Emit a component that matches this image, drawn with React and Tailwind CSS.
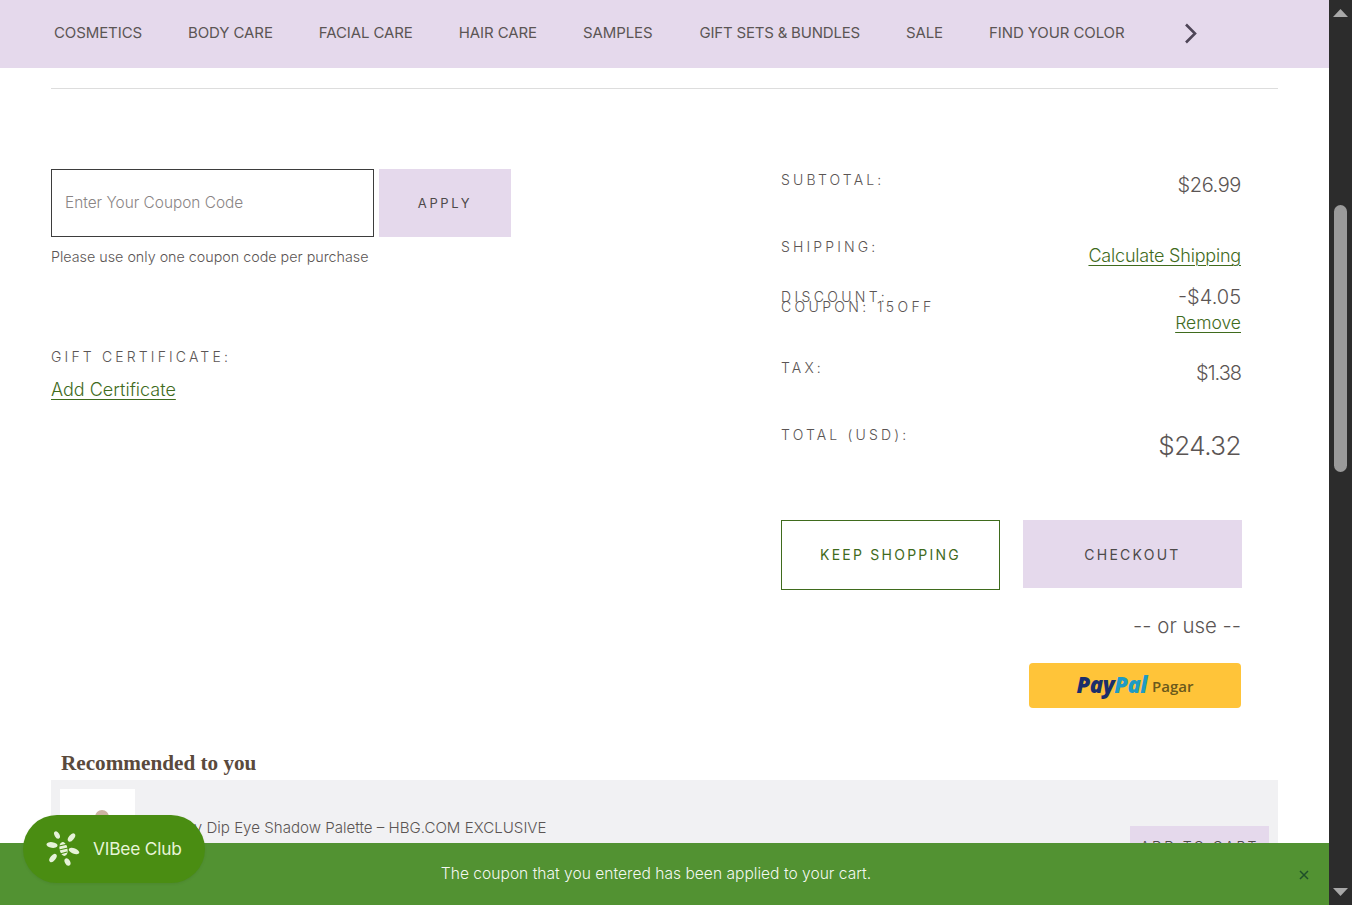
const F = "font-['Inter',sans-serif]";
const nav = ["COSMETICS","BODY CARE","FACIAL CARE","HAIR CARE","SAMPLES"];
const nav2 = ["SALE","FIND YOUR COLOR"];
const GREEN = "text-[#3f6b1d] underline underline-offset-[3px] decoration-1";
const NAVITEM = "text-[15px] font-normal whitespace-nowrap pb-[2px]";

function Label({ children, cls = "", wide = false }) {
  return <span className={`block text-[14px] leading-[20px] ${wide ? "tracking-[0.24em]" : "tracking-[0.225em]"} text-[#5b5554] whitespace-nowrap ${cls}`}>{children}</span>;
}

function Bee() {
  return (
    <svg width="36" height="36" viewBox="0 0 36 36" fill="#e6f2d8">
      <ellipse cx="18.5" cy="18" rx="4" ry="7" transform="rotate(-12 18.5 18)" />
      <path d="M14 15 23 13M14 19 23 17M15 23 22 21" stroke="#4a8d12" strokeWidth="1.2" />
      <ellipse cx="12" cy="4" rx="2.4" ry="4" transform="rotate(-30 12 4)" />
      <ellipse cx="26.5" cy="6.5" rx="2.6" ry="4.8" transform="rotate(40 26.5 6.5)" />
      <ellipse cx="7" cy="14" rx="5.6" ry="2.8" transform="rotate(8 7 14)" />
      <ellipse cx="29" cy="20" rx="5.6" ry="2.8" transform="rotate(22 29 20)" />
      <ellipse cx="8" cy="27" rx="2.6" ry="4.8" transform="rotate(40 8 27)" />
      <ellipse cx="22.5" cy="31" rx="2.6" ry="4" transform="rotate(-28 22.5 31)" />
    </svg>
  );
}

export default function App() {
  return (
    <div className={`flex h-[905px] overflow-hidden bg-white ${F} font-light text-[#5b5554]`}>
      <div className="relative flex-1 min-w-0 overflow-hidden">
        <nav className="h-[68px] bg-[#e5d9ec] flex items-center pl-[54px] gap-[46px] text-[#5b5554]">
          {nav.map(n => <span key={n} className={`${NAVITEM} tracking-[-0.1px]`}>{n}</span>)}
          <span className={`${NAVITEM} tracking-[-0.2px] pl-px`}>GIFT SETS &amp; BUNDLES</span>
          {nav2.map(n => <span key={n} className={`${NAVITEM} tracking-[-0.1px]`}>{n}</span>)}
          <svg className="ml-[10px] -mt-[4px]" width="20" height="24" viewBox="0 0 20 24" fill="none" stroke="#4e4557" strokeWidth="2.6"><path d="M5 4.5 14 13.5 5 22.5" /></svg>
        </nav>

        <main className="px-[51px] pt-[20px]">
          <div className="h-px bg-[#dddddd]" />
          <div className="flex pt-[80px] h-[660px]">
            <div className="w-[730px]">
              <div className="flex gap-[5px]">
                <div className="w-[323px] h-[68px] border border-[#3d3d3d] flex items-center pl-[13px] text-[15.4px] text-[#8a8585]">Enter Your Coupon Code</div>
                <button className="w-[132px] h-[68px] pt-[2px] bg-[#e5d9ec] text-[13px] font-normal tracking-[0.2em] text-[#4d4a4a]">APPLY</button>
              </div>
              <p className="mt-[10px] text-[14.3px] leading-[20px]">Please use only one coupon code per purchase</p>
              <Label cls="mt-[80px]">GIFT CERTIFICATE:</Label>
              <a className={`block mt-[11px] text-[18px] leading-[24px] ${GREEN}`}>Add Certificate</a>
            </div>
            <div className="w-[460px] pt-px">
              <div className="flex justify-between h-[67px]">
                <Label>SUBTOTAL:</Label>
                <span className="text-[20px] leading-[28px] mt-px tracking-[-0.02em]">$26.99</span>
              </div>
              <div className="flex justify-between h-[50px]">
                <Label>SHIPPING:</Label>
                <a className={`text-[18px] leading-[24px] mt-[7px] tracking-[-0.2px] ${GREEN}`}>Calculate Shipping</a>
              </div>
              <div className="flex justify-between h-[71px]">
                <div>
                  <Label wide>DISCOUNT:</Label>
                  <Label wide cls="-mt-[10px]">COUPON: 15OFF</Label>
                </div>
                <div className="flex flex-col items-end -mt-[4px]">
                  <span className="text-[20px] leading-[28px]">-$4.05</span>
                  <a className={`text-[17.5px] leading-[24px] ${GREEN}`}>Remove</a>
                </div>
              </div>
              <div className="flex justify-between h-[67px]">
                <Label>TAX:</Label>
                <span className="text-[20px] leading-[28px] mt-px tracking-[-0.05em]">$1.38</span>
              </div>
              <div className="flex justify-between h-[95px]">
                <Label>TOTAL (USD):</Label>
                <span className="text-[26px] leading-[34px] mt-[4px] tracking-[-0.02em]">$24.32</span>
              </div>
              <div className="flex gap-[23px] items-start w-[461px]">
                <button className="w-[219px] h-[70px] pb-[2px] border border-[#3f6b1d] text-[14px] font-normal tracking-[0.16em] text-[#3f6b1d]">KEEP SHOPPING</button>
                <button className="w-[219px] h-[68px] bg-[#e5d9ec] text-[14px] font-normal tracking-[0.16em] text-[#4d4a4a]">CHECKOUT</button>
              </div>
              <p className="text-right text-[20.4px] leading-[26px] mt-[23px]">-- or use --</p>
              <div className="flex justify-end mt-[24px]">
                <div className="w-[212px] h-[45px] rounded-[4px] bg-[#ffc439] flex items-center justify-center gap-[5px] font-['Open_Sans',sans-serif]">
                  <span className="italic font-extrabold text-[22px] tracking-[-0.02em] -mt-[2px]"><span className="text-[#1b2f6b]">Pay</span><span className="text-[#1e9bc4]">Pal</span></span>
                  <span className="text-[#6b5a1c] font-semibold text-[15px] pt-[2px]">Pagar</span>
                </div>
              </div>
            </div>
          </div>

          <h2 className="ml-[10px] font-['Liberation_Serif',serif] font-bold text-[21.2px] leading-[28px] text-[#5a4a3c]">Recommended to you</h2>
          <div className="h-[130px] bg-[#f1f1f3] mt-[3px] flex items-start pl-[9px] pr-[9px] pt-[9px]">
            <div className="w-[75px] h-[100px] bg-white flex justify-center pl-[8px] pt-[21px]">
              <div className="w-[14px] h-[40px] rounded-full bg-[#cdb3a2]" />
            </div>
            <p className="ml-[29px] mt-[28px] text-[15.1px] leading-[22px]">Berry Dip Eye Shadow Palette – HBG.COM EXCLUSIVE</p>
            <button className="ml-auto mt-[37px] w-[139px] h-[40px] bg-[#e5d9ec] text-[14px] tracking-[0.16em] text-[#4d4a4a]">ADD TO CART</button>
          </div>
        </main>

        <div className="absolute left-0 right-0 bottom-0 h-[62px] pr-[17px] bg-[#529232] flex items-center justify-center text-white/95 text-[15.6px]">
          <span>The coupon that you entered has been applied to your cart.</span>
          <svg className="absolute right-[19px] top-[26px]" width="12" height="12" viewBox="0 0 12 12" stroke="#1f4f2a" strokeWidth="1.5"><path d="M2 2 10 10M10 2 2 10" /></svg>
        </div>
        <div className="absolute left-[23px] top-[815px] w-[182px] h-[68px] rounded-full bg-[#4a8d12] flex items-center pl-[22px] gap-[12px] shadow-[0_1px_3px_rgba(0,0,0,0.08)]">
          <Bee />
          <span className="text-[#e8f5d8] text-[17.3px] font-normal tracking-[-0.01em]">VIBee Club</span>
        </div>
      </div>

      <div className="relative w-[23px] bg-[#2c2c2c] flex flex-col items-center justify-between py-[9px]">
        <svg width="15" height="8" viewBox="0 0 15 8" fill="#a8a8a8"><path d="M7.5 0 15 8H0Z" /></svg>
        <div className="absolute top-[205px] left-[5px] w-[13px] h-[267px] rounded-full bg-[#9a9a9a]" />
        <svg width="15" height="8" viewBox="0 0 15 8" fill="#a8a8a8"><path d="M0 0H15L7.5 8Z" /></svg>
      </div>
    </div>
  );
}
